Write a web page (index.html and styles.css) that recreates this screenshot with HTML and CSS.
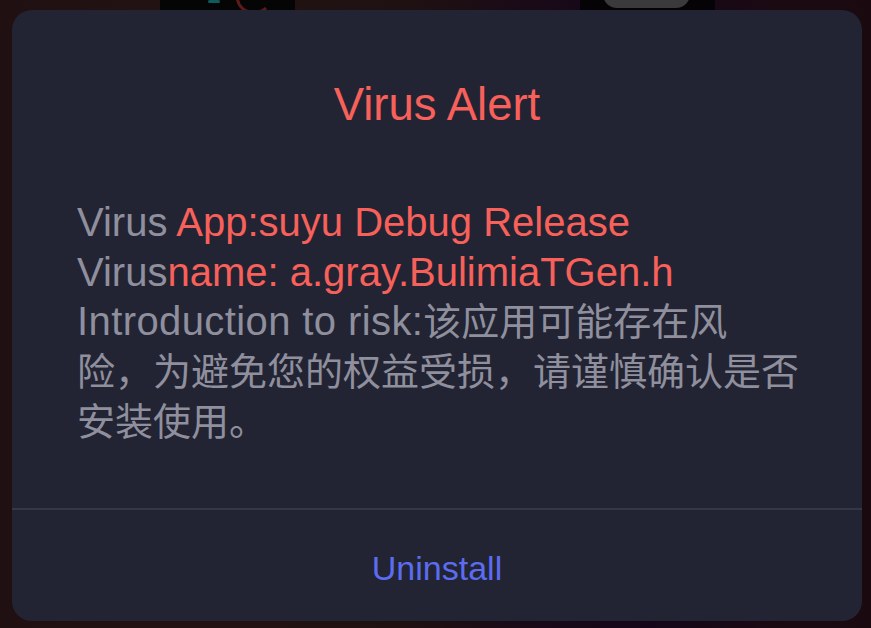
FILE: index.html
```html
<!DOCTYPE html>
<html lang="en">
<head>
<meta charset="utf-8">
<title>Virus Alert</title>
<link rel="stylesheet" href="styles.css">
</head>
<body>
<div class="backdrop">
  <div class="deco deco-a"></div>
  <div class="deco deco-teal"></div>
  <div class="deco deco-red"></div>
  <div class="deco deco-b"></div>
  <div class="deco deco-pill"></div>
</div>
<div class="dialog">
  <div class="dialog-body">
    <h1 class="title">Virus Alert</h1>
    <p class="message"><span class="muted">Virus </span><span class="alert">App:suyu Debug Release</span><br><span class="muted">Virus</span><span class="alert">name: a.gray.BulimiaTGen.h</span><br><span class="muted intro">Introduction to risk:</span><span class="muted cjk">该应用可能存在风<br>险，为避免您的权益受损，请谨慎确认是否安装使用。</span></p>
  </div>
  <div class="dialog-actions">
    <button class="action">Uninstall</button>
  </div>
</div>
</body>
</html>
```

FILE: styles.css
```css
html, body {
  margin: 0;
  padding: 0;
}

body {
  width: 871px;
  height: 628px;
  overflow: hidden;
  background: linear-gradient(to right, #211011 0%, #221312 30%, #1e0f12 50%, #1a0a18 60%, #150719 75%, #1c0a12 90%, #1a0a10 100%);
  font-family: "Liberation Sans", "Noto Sans CJK SC", sans-serif;
  display: flex;
  align-items: flex-start;
  justify-content: flex-start;
  position: relative;
}

.backdrop {
  position: absolute;
  inset: 0;
  overflow: hidden;
}

.deco {
  position: absolute;
}

.deco-a {
  left: 160px;
  top: 0;
  width: 135px;
  height: 12px;
  background: #060506;
}

.deco-teal {
  left: 208px;
  top: 0;
  width: 12px;
  height: 3px;
  background: #0f5a5c;
  border-radius: 2px;
}

.deco-red {
  left: 236px;
  top: -18px;
  width: 30px;
  height: 26px;
  border: 3px solid #5e1a18;
  border-radius: 50%;
  border-top-color: transparent;
  border-right-color: transparent;
}

.deco-b {
  left: 580px;
  top: 0;
  width: 135px;
  height: 12px;
  background: #050306;
}

.deco-pill {
  left: 603px;
  top: -20px;
  width: 87px;
  height: 28px;
  background: #3a393b;
  border-radius: 14px;
}

.dialog {
  position: relative;
  margin: 10px 0 0 12px;
  width: 850px;
  height: 611px;
  background: #222433;
  border-radius: 20px;
  display: flex;
  flex-direction: column;
}

.dialog-body {
  height: 500px;
  box-sizing: border-box;
  padding: 69px 55px 0 65px;
  border-bottom: 2px solid #353746;
}

.title {
  margin: 0;
  text-align: center;
  font-weight: normal;
  font-size: 45.5px;
  line-height: 52px;
  color: #f8605a;
  padding-right: 10px;
}

.message {
  margin: 67px 0 0 0;
  font-size: 40px;
  line-height: 49.7px;
  color: #8f8f9d;
}

.alert {
  color: #f8605a;
}

.muted {
  color: #8f8f9d;
}

.intro {
  letter-spacing: 0.4px;
}

.cjk {
  font-family: "Noto Sans CJK SC", sans-serif;
  font-size: 38px;
  line-height: 44px;
}

.dialog-actions {
  flex: 1;
  display: flex;
  align-items: center;
  justify-content: center;
}

.action {
  background: none;
  border: none;
  padding: 0;
  margin-top: 6px;
  font-family: "Liberation Sans", sans-serif;
  font-size: 34px;
  color: #5c6cf0;
  cursor: pointer;
}
```
